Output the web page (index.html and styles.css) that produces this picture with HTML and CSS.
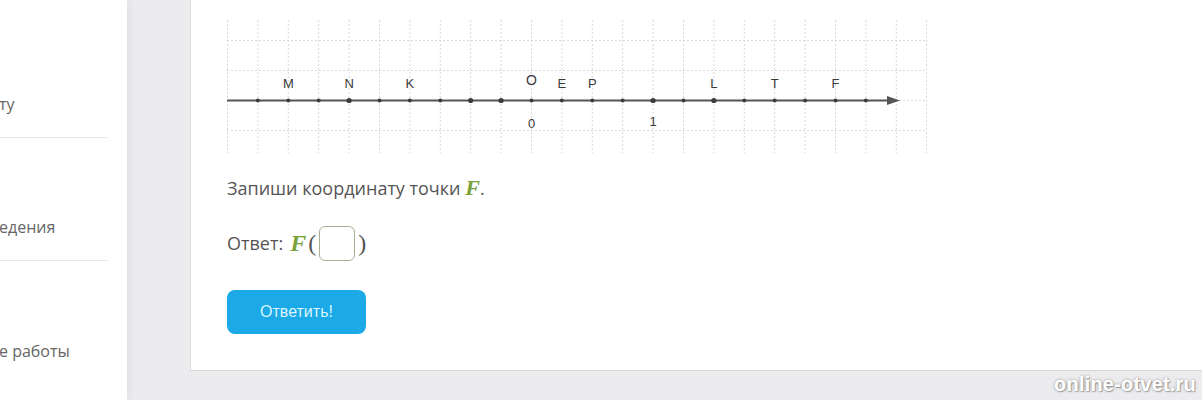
FILE: index.html
```html
<!DOCTYPE html>
<html lang="ru">
<head>
<meta charset="utf-8">
<link rel="stylesheet" href="styles.css">
</head>
<body>
<div class="page">
  <aside class="sidebar">
    <div class="nav-item"><span>ту</span></div>
    <div class="nav-item"><span>едения</span></div>
    <div class="nav-item last"><span>е работы</span></div>
  </aside>
  <main class="main">
    <section class="card">
      <svg class="numline" width="700" height="133" viewBox="0 0 700 133" xmlns="http://www.w3.org/2000/svg">
        <g stroke="#d9d9d9" stroke-width="1" stroke-dasharray="2 2">
          <line x1="0.5" y1="0" x2="0.5" y2="133"/><line x1="30.9" y1="0" x2="30.9" y2="133"/>
          <line x1="61.3" y1="0" x2="61.3" y2="133"/><line x1="91.7" y1="0" x2="91.7" y2="133"/>
          <line x1="122.1" y1="0" x2="122.1" y2="133"/><line x1="152.5" y1="0" x2="152.5" y2="133"/>
          <line x1="182.9" y1="0" x2="182.9" y2="133"/><line x1="213.3" y1="0" x2="213.3" y2="133"/>
          <line x1="243.7" y1="0" x2="243.7" y2="133"/><line x1="274.1" y1="0" x2="274.1" y2="133"/>
          <line x1="304.5" y1="0" x2="304.5" y2="133"/><line x1="334.9" y1="0" x2="334.9" y2="133"/>
          <line x1="365.3" y1="0" x2="365.3" y2="133"/><line x1="395.7" y1="0" x2="395.7" y2="133"/>
          <line x1="426.1" y1="0" x2="426.1" y2="133"/><line x1="456.5" y1="0" x2="456.5" y2="133"/>
          <line x1="486.9" y1="0" x2="486.9" y2="133"/><line x1="517.3" y1="0" x2="517.3" y2="133"/>
          <line x1="547.7" y1="0" x2="547.7" y2="133"/><line x1="578.1" y1="0" x2="578.1" y2="133"/>
          <line x1="608.5" y1="0" x2="608.5" y2="133"/><line x1="638.9" y1="0" x2="638.9" y2="133"/>
          <line x1="669.3" y1="0" x2="669.3" y2="133"/><line x1="699.5" y1="0" x2="699.5" y2="133"/>
          <line x1="0" y1="20.5" x2="700" y2="20.5"/><line x1="0" y1="50.5" x2="700" y2="50.5"/>
          <line x1="0" y1="80.5" x2="700" y2="80.5"/><line x1="0" y1="110.5" x2="700" y2="110.5"/>
        </g>
        <line x1="0" y1="80.5" x2="664" y2="80.5" stroke="#555555" stroke-width="2"/>
        <polygon points="660,76 673,80.5 660,85" fill="#555555"/>
        <g fill="#3c3c3c">
          <circle cx="30.9" cy="80.5" r="2"/><circle cx="61.3" cy="80.5" r="2"/>
          <circle cx="91.7" cy="80.5" r="2"/><circle cx="122.1" cy="80.5" r="2.6"/>
          <circle cx="152.5" cy="80.5" r="2"/><circle cx="182.9" cy="80.5" r="2"/>
          <circle cx="213.3" cy="80.5" r="2"/><circle cx="243.7" cy="80.5" r="2.6"/>
          <circle cx="274.1" cy="80.5" r="2.6"/><circle cx="304.5" cy="80.5" r="2"/>
          <circle cx="334.9" cy="80.5" r="2"/><circle cx="365.3" cy="80.5" r="2"/>
          <circle cx="395.7" cy="80.5" r="2"/><circle cx="426.1" cy="80.5" r="2.6"/>
          <circle cx="456.5" cy="80.5" r="2"/><circle cx="486.9" cy="80.5" r="2.6"/>
          <circle cx="517.3" cy="80.5" r="2"/><circle cx="547.7" cy="80.5" r="2"/>
          <circle cx="578.1" cy="80.5" r="2"/><circle cx="608.5" cy="80.5" r="2"/>
          <circle cx="638.9" cy="80.5" r="2"/>
        </g>
        <g class="lbl" text-anchor="middle">
          <text x="61.3" y="68">M</text>
          <text x="122.1" y="68">N</text>
          <text x="182.9" y="68">K</text>
          <text x="304.5" y="65" class="big">O</text>
          <text x="334.9" y="68">E</text>
          <text x="365.3" y="68">P</text>
          <text x="486.9" y="68">L</text>
          <text x="547.7" y="68">T</text>
          <text x="608.5" y="68">F</text>
          <text x="304.5" y="108">0</text>
          <text x="426.1" y="106">1</text>
        </g>
      </svg>
      <p class="task">Запиши координату точки <span class="math">F</span>.</p>
      <div class="answer">
        <span class="answer-label">Ответ:</span>
        <span class="math big-f">F</span><span class="paren">(</span><span class="box"></span><span class="paren">)</span>
      </div>
      <button class="submit">Ответить!</button>
    </section>
  </main>
</div>
<div class="watermark">online-otvet.ru</div>
</body>
</html>
```

FILE: styles.css
```css
html, body {
  margin: 0;
  padding: 0;
}
body {
  width: 1202px;
  height: 400px;
  overflow: hidden;
  background: #ecebed;
  font-family: "Open Sans", "Liberation Sans", sans-serif;
  position: relative;
}
.page {
  display: flex;
  height: 400px;
}
.sidebar {
  width: 127px;
  flex: none;
  background: #ffffff;
  box-shadow: 2px 0 8px rgba(0, 0, 0, 0.06);
  overflow: hidden;
  padding-top: 15px;
  box-sizing: border-box;
  position: relative;
  z-index: 1;
}
.nav-item {
  height: 123px;
  box-sizing: border-box;
  margin-right: 20px;
  border-bottom: 1px solid #e8e8e8;
  display: flex;
  align-items: flex-end;
  padding-bottom: 22px;
  font-size: 16px;
  color: #666666;
}
.nav-item span {
  margin-left: -1px;
}
.nav-item.last {
  border-bottom: none;
}
.main {
  flex: 1;
  padding-left: 63px;
  background: #ecebed;
}
.card {
  height: 371px;
  box-sizing: border-box;
  background: #ffffff;
  border-left: 1px solid #dcdcdc;
  border-bottom: 1px solid #d6d6d6;
  padding: 20px 0 0 36px;
  display: flex;
  flex-direction: column;
  align-items: flex-start;
}
.numline {
  display: block;
}
.lbl text {
  font-family: "Liberation Sans", Arial, sans-serif;
  font-size: 13px;
  fill: #3a3a3a;
}
.lbl text.big {
  font-size: 14px;
}
.task {
  margin: 22px 0 0 0;
  font-size: 18px;
  color: #555555;
  line-height: 26px;
}
.math {
  font-family: "Liberation Serif", "Times New Roman", serif;
  font-style: italic;
  font-weight: bold;
  font-size: 22px;
  color: #78a23a;
}
.math.big-f {
  font-size: 24px;
  margin-left: 1px;
}
.answer {
  margin-top: 24px;
  display: flex;
  align-items: center;
  font-size: 18px;
  color: #555555;
  height: 36px;
}
.answer-label {
  margin-right: 6px;
}
.paren {
  font-family: "Liberation Serif", "Times New Roman", serif;
  font-size: 24px;
  color: #555555;
  margin: 0 2px;
}
.box {
  width: 34px;
  height: 33px;
  border: 1px solid #a9ae92;
  border-radius: 6px;
  margin: 0 1px;
}
.submit {
  margin-top: 29px;
  width: 139px;
  height: 44px;
  border: none;
  border-radius: 8px;
  background: #1ba9e7;
  color: #d9f5ff;
  font-family: "Liberation Sans", Arial, sans-serif;
  font-size: 16px;
  padding: 0;
}
.watermark {
  position: absolute;
  right: 6px;
  bottom: 4px;
  font-family: "Liberation Sans", Arial, sans-serif;
  font-weight: bold;
  font-size: 20px;
  color: #ffffff;
  text-shadow: 0 0 3px rgba(0, 0, 0, 0.35), 1px 1px 1px rgba(0, 0, 0, 0.25);
  letter-spacing: 0.2px;
}
```
